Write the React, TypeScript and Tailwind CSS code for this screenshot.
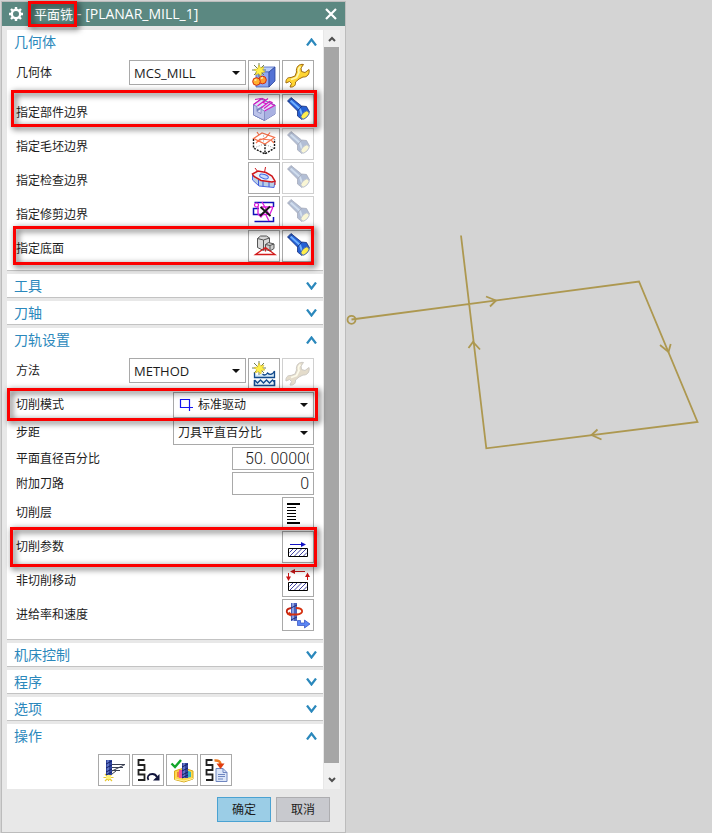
import { useState } from "react";
import type { ReactNode } from "react";

const Icon = ({ children, faded }: { children: ReactNode; faded?: boolean }) => (
  <svg
    viewBox="0 0 30 30"
    fill="none"
    aria-hidden="true"
    className={faded ? "size-[30px] opacity-40 grayscale-50" : "size-[30px]"}
  >
    {children}
  </svg>
);

const Star = () => (
  <g>
    <path d="M10 2v14M3 9h14M5 4l10 10M15 4L5 14" stroke="#6f7f52" />
    <path d="M10 4l1.500 3 3.500-1-1.500 3 2.500 2-3.500.5-.5 3.500-2.500-2.500-3 1.500 1-3.500-2.500-2 3.500-.5z" fill="#fff04a" stroke="#d8bb22" strokeWidth=".6" />
  </g>
);

const GeometryIcon = () => (
  <Icon>
    <path d="M7 11l6-5h13l-6 5z" fill="#b9cdfb" stroke="#4a64bc" strokeWidth=".8" />
    <path d="M7 11h13v15H7z" fill="#8ea8f4" stroke="#4a64bc" strokeWidth=".8" />
    <path d="M20 11l6-5v14l-6 6z" fill="#5472d4" stroke="#2c4499" strokeWidth=".8" />
    <circle cx="13.500" cy="19" r="3.800" fill="#ff9b2e" stroke="#d42a10" />
    <circle cx="7.500" cy="20.500" r="3.800" fill="#ffb02e" stroke="#d42a10" />
    <path d="M5.500 19.500l2-1M12 17.500l2-1" stroke="#ffe9a0" strokeWidth="1.500" />
    <Star />
  </Icon>
);

const WrenchIcon = ({ faded }: { faded?: boolean }) => (
  <Icon faded={faded}>
    <path
      d="M20.500 3.500C16.500 2.500 12.500 6 13.500 11L12 15l-4 1.500c-3.500-.5-5.500 2-5 5.500l3.500-1.500 2 2-1.500 3.500c3.500.5 6-1.500 5.500-5l3.500-3 4-2c4 .5 7-3 6-7.500l-4 3-3.500-1-.5-3.500z"
      fill={faded ? "#d0a855" : "#ffd532"}
      stroke={faded ? "#8a7a5c" : "#a06c14"}
      strokeLinejoin="round"
    />
    <path d="M17.500 5.500c-2 1.500-2.500 3.500-1.500 6l-2.500 5-5.500 2" stroke="#fff7a8" strokeWidth="1.800" />
  </Icon>
);

const PartIcon = () => (
  <Icon>
    <path d="M4.500 9.500L12 4l14 6v9l-10.500 6.500-11-5.500z" fill="#dfe2f8" stroke="#6874b4" />
    <path d="M15.500 16.500L26 10.500V19l-10.500 6.500z" fill="#a9b1e2" />
    <path d="M4.500 10l3.500 1.500v5l4 2v-4.500l3.500 2v9.500l-11-5.500z" fill="#bcc3ea" stroke="#7682be" strokeWidth=".8" />
    <path d="M8 16.500l5.500-3.500v-2L8 14z" fill="#7682be" />
    <path d="M4.500 9.500L13 3.500l3.500 1.500-8 6M12 13l8.500-6.500 2.500 1-8 6M15.500 16l10-5.500-3-1.500M6 4.500l6-1M19 3.500l-5 4 4 1.500" stroke="#d619c4" strokeWidth="1.200" />
  </Icon>
);

const FlashlightIcon = ({ faded }: { faded?: boolean }) => (
  <Icon faded={faded}>
    <path d="M4.500 6L8 2.500l10.500 8.500 5 .5 3 5.500-7.500 7.500-4.500-3.500v-5z" fill="#2460d4" stroke="#16307c" strokeWidth=".8" strokeLinejoin="round" />
    <path d="M7 5l10 9 2 6" stroke="#6fb0ff" strokeWidth="2" />
    <path d="M14.500 16l4.500-5M5.500 7L9 3.500" stroke="#16307c" />
    <ellipse cx="22" cy="20" rx="2.800" ry="5" transform="rotate(45 22 20)" fill="#ffee4c" stroke="#3a61b8" strokeWidth=".9" />
  </Icon>
);

const BlankIcon = () => (
  <Icon>
    <path d="M4.500 10v9L16 25l9.500-6v-9M16 15v10" stroke="#111" strokeWidth="1.400" strokeDasharray="2 1.200" />
    <path d="M14.500 4v11M5 19l10-4 10 4" stroke="#999" strokeDasharray="1 1.500" />
    <path d="M4.500 9.500L13 4l12.500 4.500L16 15zM8 3l2 3M21 3.500l-4 5-7 3M7 14l4-4 11 1 3 3" stroke="#f4714c" strokeWidth="1.200" />
  </Icon>
);

const CheckIcon = () => (
  <Icon>
    <path d="M3.500 12v5L10 23l15 1.500 1-6.500-15-2z" fill="#b9cfe6" stroke="#4f68e0" />
    <path d="M9.500 17v5.500M14 18v5.500M20 19v5" stroke="#3f5bd8" />
    <path d="M3.500 11L9 8l8 1.500 6 3.500 3 5-3 1-11-1.500-7-4z" fill="#edf2fa" stroke="#d0181c" strokeWidth="1.500" />
    <path d="M6 5l3 4M16.500 4l-1 5.500M26 18.500V22" stroke="#d0181c" />
    <ellipse cx="15" cy="13.500" rx="4.500" ry="2" transform="rotate(18 15 13.500)" fill="#c8dcfa" stroke="#4467e4" />
  </Icon>
);

const TrimIcon = () => (
  <Icon>
    <path d="M5.500 5.500h19V10M5.500 24.500h19V20M10 11.500H4.500v6H12" stroke="#1010b8" strokeWidth="1.500" />
    <circle cx="7.500" cy="8" r="2" stroke="#dc1cdc" strokeWidth="1.200" />
    <path d="M9 9.500V17l3 3 5-7M13 5l8 14M24 10l-3 7-10 1M24 10H12M17 18l3 6" stroke="#dc1cdc" strokeWidth="1.300" />
    <path d="M11.500 10l10 9M21 9.500L11 19" stroke="#181818" strokeWidth="1.800" />
  </Icon>
);

const FloorIcon = () => (
  <Icon>
    <path d="M8.500 7.500l3-2.500h6l3 2v8.500l-6 4-6-3z" fill="#d9d9d9" stroke="#555" />
    <path d="M8.500 7.500l6 1.500 6-2M14.500 9v10" stroke="#555" />
    <path d="M16.500 13.500l3-2 5.500 1.500v4.500L21 20l-4.500-1.500z" fill="#cdcdcd" stroke="#555" />
    <path d="M16.500 13.500l4.500 1 4-1.500M21 14.500V20" stroke="#555" />
    <path d="M6.500 23.500l10-7 9.500 7zM16.500 17v3.500" stroke="#d21a1a" strokeWidth="1.300" />
  </Icon>
);

const MethodIcon = () => (
  <Icon>
    <path d="M5.500 14v4.500h20V12c-2 4-5 4-7 2-2 3-4 2-6 1-3 2-5 1-7-1z" fill="#d4e8f6" />
    <path d="M5.500 13v5.500h20V12c-2 4-5 4-7 2-2 3-4 2-5 1" stroke="#124a8c" strokeWidth="1.300" />
    <path d="M5.500 21v5.500h20V21" fill="#e6f2fa" stroke="#124a8c" strokeWidth="1.600" />
    <path d="M5.500 21l3 3 3-3 3 3 3-3 3 3 3-3 2 2" stroke="#124a8c" strokeWidth="1.400" />
    <Star />
  </Icon>
);

const LayersIcon = () => (
  <Icon>
    <path d="M4 6h13M4 25h13" stroke="#000" strokeWidth="2" />
    <path d="M4 9.500h9M4 12.500h9M4 15.500h9M4 18.500h9M4 21.500h9" stroke="#000" />
  </Icon>
);

const Hatch = () => (
  <g>
    <path d="M5.500 16.500h19v8h-19z" fill="#fff" stroke="#000" />
    <path d="M6.500 20.500l3.500-3.500M7 24l7-7M11.500 24l7-7M16 24l7-7M20.500 24l3.500-3.500" stroke="#2a2e9c" strokeWidth=".9" />
  </g>
);

const CutParamsIcon = () => (
  <Icon>
    <Hatch />
    <path d="M7 12.500h12" stroke="#1010c4" />
    <path d="M18 10l5 2.500-5 2.500z" fill="#1010c4" />
  </Icon>
);

const NonCutIcon = () => (
  <Icon>
    <Hatch />
    <path d="M11 5.500h11M5.500 7v5M24.500 9v5" stroke="#c81414" />
    <path d="M12 3v5L7 5.500zM3 10.500h5l-2.500 4.500zM22 11h5l-2.500-4.500z" fill="#c81414" />
  </Icon>
);

const FeedIcon = () => (
  <Icon>
    <path d="M9 8c-7 .5-7 6 0 6.500" stroke="#c4200c" strokeWidth="1.800" />
    <path d="M8 3h6v18H8z" fill="#4c62bc" />
    <path d="M10 3v18" stroke="#a5b6f0" strokeWidth="1.500" />
    <path d="M8 8l6-3M8 20l6-3" stroke="#1c2d7c" />
    <path d="M13 8c8 0 8 6 1 6.500H7" stroke="#d5300f" strokeWidth="1.800" />
    <path d="M7 11.500l-3 3 4 2z" fill="#d5300f" />
    <path d="M14.500 20.500h3v2.500h4v-3l5.500 4-5.500 4v-2.500h-7z" fill="#5a86f4" stroke="#2f4cc0" strokeWidth=".7" />
  </Icon>
);

const Cutter = ({ x, y }: { x: number; y: number }) => (
  <g transform={`translate(${x} ${y})`}>
    <path d="M0 0h6v15H0z" fill="#31459f" />
    <path d="M2 0v15" stroke="#8fa4ea" />
    <path d="M0 4l6-3M0 8l6-3M0 12l6-3M0 15l6-3" stroke="#141f66" />
  </g>
);

const GenerateIcon = () => (
  <Icon>
    <path d="M13 9.500h13L13 16M13 12.500h11M13 15.500h8M13 19l4-3" stroke="#3c4254" />
    <path d="M9.500 18v8M4.500 22.500h10M6 19l7 7M13 19l-7 7" stroke="#e8c630" strokeWidth="1.200" />
    <circle cx="9.500" cy="22" r="2.500" fill="#fff27a" />
    <Cutter x={7} y={5} />
  </Icon>
);

const Track = () => <path d="M11.500 5H5.500v5h6v5h-6M11.500 15h-6v4.500h6V25h-6.500" stroke="#222" strokeWidth="1.800" />;

const ReplayIcon = () => (
  <Icon>
    <Track />
    <path d="M15.500 25c-2-3 0-6 4-6 2 0 3.500 1 4.500 3" stroke="#10143c" strokeWidth="1.800" />
    <path d="M26.500 19v6.500H20z" fill="#10143c" />
  </Icon>
);

const VerifyIcon = () => (
  <Icon>
    <path d="M7.500 16l9.500-3 9 3v8l-9 3-9.500-2.500z" fill="#ffd84c" stroke="#d8aa1c" />
    <path d="M10 17l5-1.500V23l-5-1z" fill="#f08040" />
    <path d="M19 15l5 2v5l-5 1z" fill="#35b4c0" />
    <path d="M12 15h3v8h-3z" fill="#e850a0" />
    <Cutter x={15} y={8} />
    <path d="M8 24l9 2 9-2.500" stroke="#fff1a0" />
    <path d="M4.500 8.500L8 12l6-7" stroke="#12a52a" strokeWidth="2.400" />
  </Icon>
);

const OutputIcon = () => (
  <Icon>
    <Track />
    <path d="M15 13.500h7l4 4v9H15z" fill="#dce6f8" stroke="#6f86c0" />
    <path d="M22 13.500v4h4M17 19.500h7M17 21.500h7M17 24h5" stroke="#6f86c0" />
    <path d="M13.500 5.500c4-.5 6 1 6 4" stroke="#ee7a20" strokeWidth="2.500" />
    <path d="M15.500 8.500h8L19.500 14z" fill="#e03c10" />
  </Icon>
);

const IconButton = ({ label, disabled, children }: { label: string; disabled?: boolean; children: ReactNode }) => (
  <button
    type="button"
    aria-label={label}
    disabled={disabled}
    className={`size-8 shrink-0 border bg-white ${disabled ? "border-[#d0d0d0]" : "border-[#a9a9a9]"}`}
  >
    {children}
  </button>
);

// red annotation frame lying over a row or the title
const Mark = ({ className }: { className: string }) => (
  <span
    aria-hidden="true"
    className={`pointer-events-none absolute z-10 border-3 border-[#fb0000] drop-shadow-[2px_2px_3px_rgba(0,0,0,0.75)] ${className}`}
  />
);

const Select = ({ id, options, icon, className }: { id: string; options: string[]; icon?: ReactNode; className: string }) => (
  <div className={`grid shrink-0 items-center ${className}`}>
    <select
      id={id}
      className={`col-start-1 row-start-1 size-full appearance-none border border-[#a9a9a9] bg-white pr-5 outline-none ${icon ? "pl-6" : "pl-1"}`}
    >
      {options.map((o) => (
        <option key={o}>{o}</option>
      ))}
    </select>
    {icon && <span className="pointer-events-none col-start-1 row-start-1 ml-1.5 justify-self-start">{icon}</span>}
    <svg viewBox="0 0 8 4" className="pointer-events-none col-start-1 row-start-1 mr-1.5 h-1 w-2 justify-self-end" aria-hidden="true">
      <path d="M0 0h8L4 4z" fill="#111" />
    </svg>
  </div>
);

const Section = ({ title, defaultOpen, last, children }: { title: string; defaultOpen?: boolean; last?: boolean; children?: ReactNode }) => {
  const [open, setOpen] = useState(!!defaultOpen);
  return (
    <section className={last ? "bg-white" : "border-b border-[#c3c3c3] bg-white"}>
      <h2>
        <button
          type="button"
          aria-expanded={open}
          onClick={() => setOpen(!open)}
          className="flex h-[23px] w-full items-center justify-between pr-1.5 pl-[7px] text-[14px] leading-5 text-[#2b88bc]"
        >
          {title}
          <svg viewBox="0 0 11 8" className="h-2 w-[11px]" fill="none" aria-hidden="true">
            <path d={open ? "M1 7.500l4.500-6 4.500 6" : "M1 .5l4.500 6 4.500-6"} stroke="#2b88bc" strokeWidth="2.200" />
          </svg>
        </button>
      </h2>
      {open && children}
    </section>
  );
};

const boundaries = [
  { label: "指定部件边界", icon: <PartIcon />, mark: "-top-1 -bottom-px -left-[5px] -right-[3px]" },
  { label: "指定毛坯边界", icon: <BlankIcon />, disabled: true },
  { label: "指定检查边界", icon: <CheckIcon />, disabled: true },
  { label: "指定修剪边界", icon: <TrimIcon />, disabled: true },
  { label: "指定底面", icon: <FloorIcon />, mark: "-top-1 -bottom-[3px] -left-[3px] right-0" },
];

const settings = [
  { label: "切削层", icon: <LayersIcon /> },
  { label: "切削参数", icon: <CutParamsIcon />, mark: "-top-1 -bottom-1 -left-1.5 -right-[3px]" },
  { label: "非切削移动", icon: <NonCutIcon /> },
  { label: "进给率和速度", icon: <FeedIcon /> },
];

const actions = [
  { label: "生成", icon: <GenerateIcon /> },
  { label: "重播", icon: <ReplayIcon /> },
  { label: "确认", icon: <VerifyIcon /> },
  { label: "列表", icon: <OutputIcon /> },
];

const inputClass =
  "h-[23px] w-[82px] border border-[#a9a9a9] bg-white pr-1 pl-3 font-[Roboto,sans-serif] text-[16px] font-light outline-none";

const App = () => {
  return (
    <div className="flex min-h-screen bg-[#d4d4d4] pt-px pl-px font-['Open_Sans','Noto_Sans_CJK_SC',sans-serif] text-[12px] leading-4 text-[#1c1c1c]">
      <main className="flex w-[345px] shrink-0 flex-col border border-[#bcbcbc] bg-[#e8e8e8]">
        <header className="flex h-6 items-center bg-[#5b8881] pr-2 pl-1.5 text-white">
          <svg viewBox="0 0 16 16" className="size-4" fill="none" aria-hidden="true">
            <circle cx="8" cy="8" r="4.200" stroke="#fff" strokeWidth="2.400" />
            <path d="M8 1v3M8 12v3M1 8h3M12 8h3M3 3l2 2M11 11l2 2M13 3l-2 2M5 11l-2 2" stroke="#fff" strokeWidth="2.400" />
          </svg>
          <h1 className="ml-2.5 flex flex-1 items-center text-[14px] leading-6">
            <span className="relative text-[13px]">
              平面铣
              <Mark className="-top-px -bottom-px -left-1.5 -right-1" />
            </span>
            <span className="ml-1 whitespace-pre">- [PLANAR_MILL_1]</span>
          </h1>
          <button type="button" aria-label="关闭">
            <svg viewBox="0 0 12 12" className="size-3" aria-hidden="true">
              <path d="M1 1l10 10M11 1L1 11" stroke="#fff" strokeWidth="2.200" />
            </svg>
          </button>
        </header>

        <div className="flex pt-1 pr-[5px] pl-[5px]">
          <div className="flex flex-1 flex-col gap-[3px]">
            <Section title="几何体" defaultOpen>
              <div className="flex flex-col gap-0.5 px-[9px] pt-[7px] pb-2">
                <div className="flex gap-0.5">
                  <label htmlFor="geometry" className="flex-1 leading-[26px]">几何体</label>
                  <Select id="geometry" options={["MCS_MILL"]} className="h-[25px] w-[117px] text-[13px]" />
                  <IconButton label="新建几何体"><GeometryIcon /></IconButton>
                  <IconButton label="编辑几何体"><WrenchIcon /></IconButton>
                </div>
                {boundaries.map((b) => (
                  <div key={b.label} className="relative flex items-center gap-0.5">
                    <span className="flex-1 pt-1.5">{b.label}</span>
                    <IconButton label={b.label}>{b.icon}</IconButton>
                    <IconButton label={`显示${b.label}`} disabled={b.disabled}>
                      <FlashlightIcon faded={b.disabled} />
                    </IconButton>
                    {b.mark && <Mark className={b.mark} />}
                  </div>
                ))}
              </div>
            </Section>
            <Section title="工具" />
            <Section title="刀轴" />
            <Section title="刀轨设置" defaultOpen>
              <div className="flex flex-col gap-0.5 px-[9px] pt-[7px] pb-2">
                <div className="flex gap-0.5">
                  <label htmlFor="method" className="flex-1 leading-[26px]">方法</label>
                  <Select id="method" options={["METHOD"]} className="h-[25px] w-[117px] text-[13px]" />
                  <IconButton label="新建方法"><MethodIcon /></IconButton>
                  <IconButton label="编辑方法" disabled><WrenchIcon faded /></IconButton>
                </div>
                <div className="relative flex items-center">
                  <label htmlFor="pattern" className="flex-1">切削模式</label>
                  <Select
                    id="pattern"
                    options={["标准驱动"]}
                    className="h-[26px] w-[141px]"
                    icon={
                      <svg viewBox="0 0 14 14" className="size-3.5" fill="none" aria-hidden="true">
                        <path d="M10.500 13V1.500h-9v8H14" stroke="#1414f0" strokeWidth="1.200" />
                      </svg>
                    }
                  />
                  <Mark className="-top-1 -bottom-[3px] -left-[9px] -right-1" />
                </div>
                <div className="flex items-center">
                  <label htmlFor="stepover" className="flex-1">步距</label>
                  <Select id="stepover" options={["刀具平直百分比"]} className="h-[25px] w-[141px]" />
                </div>
                <div className="flex items-center">
                  <label htmlFor="percent" className="flex-1">平面直径百分比</label>
                  <input id="percent" defaultValue="50. 00000" className={inputClass} />
                </div>
                <div className="flex items-center">
                  <label htmlFor="passes" className="flex-1">附加刀路</label>
                  <input id="passes" defaultValue="0" className={`${inputClass} text-right`} />
                </div>
                {settings.map((s) => (
                  <div key={s.label} className="relative flex items-center">
                    <span className="flex-1">{s.label}</span>
                    <IconButton label={s.label}>{s.icon}</IconButton>
                    {s.mark && <Mark className={s.mark} />}
                  </div>
                ))}
              </div>
            </Section>
            <Section title="机床控制" />
            <Section title="程序" />
            <Section title="选项" />
            <Section title="操作" defaultOpen last>
              <div className="flex justify-center gap-0.5 pt-[7px] pb-[3px]">
                {actions.map((a) => (
                  <IconButton key={a.label} label={a.label}>{a.icon}</IconButton>
                ))}
              </div>
            </Section>
          </div>

          <div className="ml-px flex w-4 flex-col bg-[#f0f0f0]">
            <button type="button" aria-label="向上滚动" className="flex h-[17px] items-center justify-center">
              <svg viewBox="0 0 8 6" className="h-1.5 w-2" fill="none" aria-hidden="true">
                <path d="M1 5l3-3 3 3" stroke="#505050" strokeWidth="2" />
              </svg>
            </button>
            <div className="mr-px flex-1 bg-[#a6a6a6]" />
            <button type="button" aria-label="向下滚动" className="flex h-[26px] items-center justify-center pt-2">
              <svg viewBox="0 0 8 6" className="h-1.5 w-2" fill="none" aria-hidden="true">
                <path d="M1 1l3 3 3-3" stroke="#505050" strokeWidth="2" />
              </svg>
            </button>
          </div>
        </div>

        <footer className="flex justify-end gap-[5px] px-[15px] py-2">
          <button type="button" className="h-[25px] w-[54px] border border-[#4aa2d2] bg-[#9bcde6]">确定</button>
          <button type="button" className="h-[25px] w-[54px] border border-[#adadb0] bg-[#c8c9ce]">取消</button>
        </footer>
      </main>

      <svg viewBox="346 1 366 832" preserveAspectRatio="xMinYMin meet" className="min-w-0 flex-1 self-start" fill="none" role="img" aria-label="刀轨">
        <g stroke="#ad9850" strokeWidth="1.800">
          <circle cx="351.500" cy="319.800" r="4" />
          <path d="M351.500 319.500L639 281.500 697.500 422 486.300 448.300 461 235.500" />
          <path d="M486 296.500l10 4-6 6M660 345l8.500 7 2.200-8M597.500 429.500l-6 5.500 10 4.500M468.500 348l4.500-6 7 7.500" />
        </g>
      </svg>
    </div>
  );
};

export default App;
